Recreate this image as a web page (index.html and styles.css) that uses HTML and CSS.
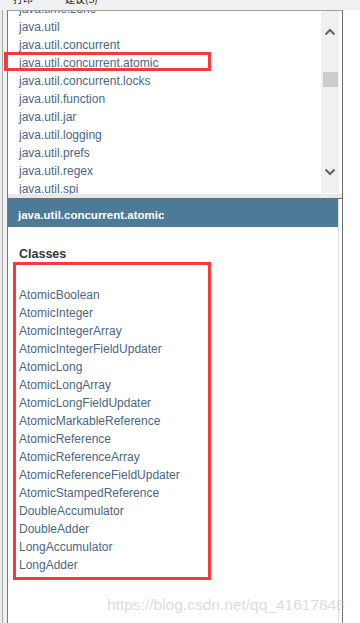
FILE: index.html
```html
<!DOCTYPE html>
<html lang="zh-CN">
<head>
    <meta charset="UTF-8">
    <meta name="viewport" content="width=device-width, initial-scale=1.0">
    <title>java.util.concurrent.atomic</title>
    <link rel="stylesheet" href="styles.css">
</head>
<body>
    <div class="toolbar">
        <span class="tool">打印</span>
        <span class="tool">建议(S)</span>
    </div>

    <div class="frame">
        <div class="edge-left"></div>
        <div class="panes">
            <div class="pkg-pane">
                <div class="pkg-scroll">
                    <ul class="pkg-list">
                        <li>java.time.zone</li>
                        <li>java.util</li>
                        <li>java.util.concurrent</li>
                        <li>java.util.concurrent.atomic</li>
                        <li>java.util.concurrent.locks</li>
                        <li>java.util.function</li>
                        <li>java.util.jar</li>
                        <li>java.util.logging</li>
                        <li>java.util.prefs</li>
                        <li>java.util.regex</li>
                        <li>java.util.spi</li>
                    </ul>
                </div>
                <div class="scrollbar">
                    <div class="sb-btn">
                        <svg width="12" height="8" viewBox="0 0 12 8"><path d="M1.5 6.5 L6 2 L10.5 6.5" fill="none" stroke="#606060" stroke-width="2"/></svg>
                    </div>
                    <div class="sb-track">
                        <div class="sb-thumb"></div>
                    </div>
                    <div class="sb-btn">
                        <svg width="12" height="8" viewBox="0 0 12 8"><path d="M1.5 1.5 L6 6 L10.5 1.5" fill="none" stroke="#606060" stroke-width="2"/></svg>
                    </div>
                </div>
                <div class="gutter"></div>
            </div>

            <div class="splitter"></div>

            <div class="class-pane">
                <div class="class-content">
                    <div class="pkg-header">java.util.concurrent.atomic</div>
                    <h2 class="classes-title">Classes</h2>
                    <div class="mark-box">
                        <ul class="class-list">
                            <li>AtomicBoolean</li>
                            <li>AtomicInteger</li>
                            <li>AtomicIntegerArray</li>
                            <li>AtomicIntegerFieldUpdater</li>
                            <li>AtomicLong</li>
                            <li>AtomicLongArray</li>
                            <li>AtomicLongFieldUpdater</li>
                            <li>AtomicMarkableReference</li>
                            <li>AtomicReference</li>
                            <li>AtomicReferenceArray</li>
                            <li>AtomicReferenceFieldUpdater</li>
                            <li>AtomicStampedReference</li>
                            <li>DoubleAccumulator</li>
                            <li>DoubleAdder</li>
                            <li>LongAccumulator</li>
                            <li>LongAdder</li>
                        </ul>
                    </div>
                </div>
                <div class="gutter gutter-line"></div>
            </div>
        </div>
    </div>

    <div class="mark-row"></div>
    <div class="watermark">https://blog.csdn.net/qq_41617848</div>
</body>
</html>
```

FILE: styles.css
```css
html, body {
    margin: 0;
    padding: 0;
}
body {
    width: 360px;
    height: 623px;
    overflow: hidden;
    background-color: #ffffff;
    font-family: "Liberation Sans", Arial, "Noto Sans CJK SC", sans-serif;
    position: relative;
}
ul {
    list-style: none;
    margin: 0;
    padding: 0;
}

/* top toolbar, mostly scrolled out of view */
.toolbar {
    height: 10px;
    box-sizing: border-box;
    background-color: #f0f0f0;
    display: flex;
    align-items: flex-end;
    gap: 32px;
    padding: 0 0 6px 13px;
    overflow: hidden;
}
.tool {
    font-size: 10px;
    line-height: 10px;
    color: #1a1a1a;
    font-family: "Noto Sans CJK SC", sans-serif;
}

.frame {
    display: flex;
    height: 613px;
}
.edge-left {
    width: 8px;
    box-sizing: border-box;
    border-right: 1px solid #7a7a7a;
    background: linear-gradient(to right, #ececec 2px, #a8a8a8 2px, #a8a8a8 3px, #f0f0f0 3px);
}
.panes {
    width: 335px;
    box-sizing: border-box;
    border-top: 1px solid #a0a0a0;
    border-right: 1px solid #6d6d6d;
    display: flex;
    flex-direction: column;
}

/* package list */
.pkg-pane {
    display: flex;
    height: 183px;
}
.pkg-scroll {
    width: 313px;
    overflow: hidden;
    background-color: #ffffff;
}
.pkg-list {
    margin-top: -11px;
    padding-left: 11px;
}
.pkg-list li,
.class-list li {
    font-size: 12px;
    line-height: 18px;
    color: #4a6782;
    white-space: nowrap;
}
.scrollbar {
    width: 18px;
    background-color: #f0f0f0;
    display: flex;
    flex-direction: column;
    height: 182px;
}
.sb-btn {
    height: 42px;
    display: flex;
    align-items: center;
    justify-content: center;
}
.sb-track {
    flex: 1;
    padding-top: 19px;
    display: flex;
    justify-content: center;
}
.sb-thumb {
    width: 15px;
    height: 15px;
    background-color: #cdcdcd;
}
.gutter {
    width: 3px;
    background-color: #ffffff;
}

.splitter {
    height: 4px;
    background-color: #e8e8e8;
    border-bottom: 1px solid #6d6d6d;
}

/* class list */
.class-pane {
    flex: 1;
    display: flex;
    overflow: hidden;
}
.class-content {
    width: 330px;
}
.gutter-line {
    border-left: 1px solid #dcdcdc;
}
.pkg-header {
    height: 28px;
    box-sizing: border-box;
    padding: 4px 0 0 10px;
    line-height: 24px;
    background-color: #4d7a97;
    color: #ffffff;
    font-size: 11.5px;
    font-weight: bold;
}
.classes-title {
    margin: 20px 0 0 11px;
    font-size: 12.5px;
    line-height: 15px;
    font-weight: bold;
    color: #353833;
}
.mark-box {
    margin-left: 5px;
    width: 198px;
    box-sizing: border-box;
    border: 3px solid #f43a3a;
    padding: 21px 0 3px 3px;
}

/* annotation drawn over the package list */
.mark-row {
    position: absolute;
    left: 4px;
    top: 52px;
    width: 207px;
    height: 19px;
    box-sizing: border-box;
    border: 3px solid #f43a3a;
}
.watermark {
    position: absolute;
    left: 107px;
    top: 596px;
    font-size: 15.5px;
    line-height: 18px;
    color: rgba(190, 190, 190, 0.55);
    white-space: nowrap;
}
```
